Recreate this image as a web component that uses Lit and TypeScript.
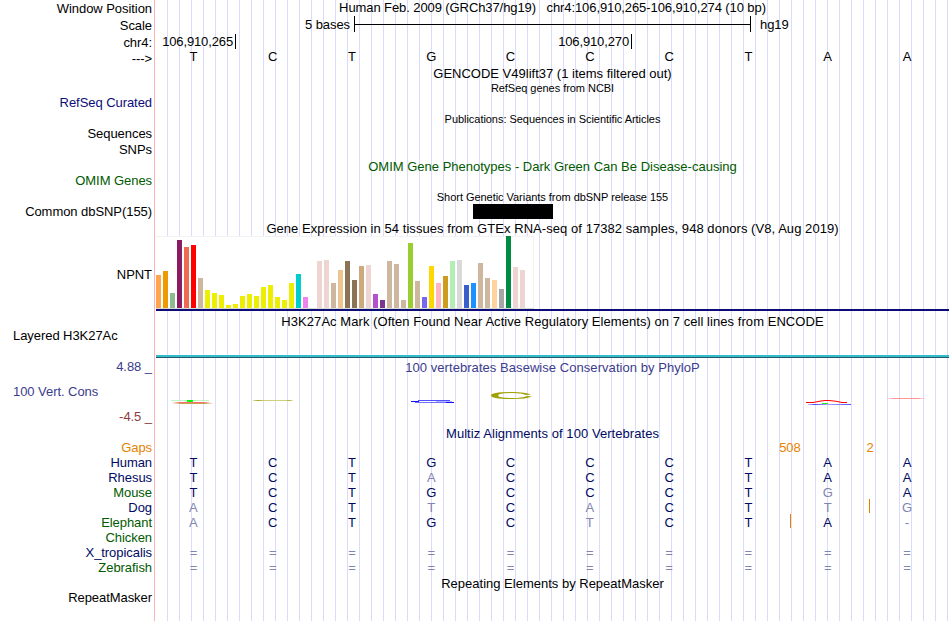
import { LitElement, html, css, svg } from 'lit';
import { customElement, property } from 'lit/decorators.js';
import { classMap } from 'lit/directives/class-map.js';

interface Label {
  text: string;
  color?: string;
  left?: boolean;
}

interface Species {
  name: string;
  bases: string;
  // bases that differ from the reference genome
  faded: number[];
  insert?: number;
}

const LABELS: Label[] = [
  { text: 'Window Position' },
  { text: 'Scale' },
  { text: 'chr4:' },
  { text: '--->' },
  { text: 'RefSeq Curated', color: 'blue' },
  { text: 'Sequences' },
  { text: 'SNPs' },
  { text: 'OMIM Genes', color: 'green' },
  { text: 'Common dbSNP(155)' },
  { text: 'NPNT' },
  { text: 'Layered H3K27Ac', left: true },
  { text: '4.88 _', color: 'slate' },
  { text: '100 Vert. Cons', color: 'slate', left: true },
  { text: '-4.5 _', color: 'maroon' },
  { text: 'Gaps', color: 'orange' },
  { text: 'Human', color: 'navy' },
  { text: 'Rhesus', color: 'navy' },
  { text: 'Mouse', color: 'green' },
  { text: 'Dog', color: 'navy' },
  { text: 'Elephant', color: 'green' },
  { text: 'Chicken', color: 'green' },
  { text: 'X_tropicalis', color: 'navy' },
  { text: 'Zebrafish', color: 'green' },
  { text: 'RepeatMasker' },
];

const SPECIES: Species[] = [
  { name: 'Human', bases: 'TCTGCCCTAA', faded: [] },
  { name: 'Rhesus', bases: 'TCTACCCTAA', faded: [3] },
  { name: 'Mouse', bases: 'TCTGCCCTGA', faded: [8] },
  { name: 'Dog', bases: 'ACTTCACTTG', faded: [0, 3, 5, 8, 9], insert: 9 },
  { name: 'Elephant', bases: 'ACTGCTCTA-', faded: [0, 5, 9], insert: 8 },
  { name: 'Chicken', bases: '          ', faded: [] },
  { name: 'X_tropicalis', bases: '==========', faded: [0, 1, 2, 3, 4, 5, 6, 7, 8, 9] },
  { name: 'Zebrafish', bases: '==========', faded: [0, 1, 2, 3, 4, 5, 6, 7, 8, 9] },
];

// [height, color] for each of the 54 tissues
const TISSUES: [number, string][] = [
  [33, '#ffa54f'], [37, '#ee9a00'], [15, '#8fbc8f'], [68, '#8b1c62'],
  [61, '#ee6a50'], [63, '#ff0000'], [30, '#cdb79e'], [18, '#eeee00'],
  [15, '#eeee00'], [13, '#eeee00'], [3, '#eeee00'], [4, '#eeee00'],
  [12, '#eeee00'], [14, '#eeee00'], [12, '#eeee00'], [21, '#eeee00'],
  [23, '#eeee00'], [11, '#eeee00'], [8, '#eeee00'], [25, '#eeee00'],
  [34, '#00cdcd'], [11, '#ee82ee'], [0, '#9ac0cd'], [47, '#eed5d2'],
  [48, '#eed5d2'], [25, '#cdb79e'], [38, '#eec591'], [47, '#8b7355'],
  [28, '#8b7355'], [42, '#cdaa7d'], [43, '#eed5d2'], [14, '#b452cd'],
  [8, '#7a378b'], [47, '#cdb79e'], [44, '#cdb79e'], [8, '#cdb79e'],
  [65, '#9acd32'], [27, '#cdb79e'], [11, '#7a67ee'], [42, '#ffd700'],
  [25, '#ffb6c1'], [32, '#cd9b1d'], [47, '#b4eeb4'], [48, '#d9d9d9'],
  [23, '#3a5fcd'], [25, '#1e90ff'], [45, '#cdb79e'], [30, '#cdb79e'],
  [28, '#ffd39b'], [19, '#a6a6a6'], [72, '#008b45'], [41, '#eed5d2'],
  [38, '#eed5d2'], [0, '#ff00ff'],
];

const colors = css`
  .blue { color: #0c0c78; }
  .navy { color: #000a64; }
  .green { color: #005a00; }
  .slate { color: #3c3c8c; }
  .maroon { color: #8c3c3c; }
  .orange { color: #e68200; }
`;

@customElement('gb-labels')
export class GbLabels extends LitElement {
  @property({ type: Array }) labels: Label[] = [];

  static styles = [colors, css`
    :host {
      align-items: end;
      display: grid;
      grid-template-rows:
        16px 17px 17px 16px 44px 31px 16px 31px 31px 63px 61px 31px 25px 25px
        31px repeat(8, 15px) 30px;
      letter-spacing: -0.06px;
      padding: 0 2px 0 13px;
      text-align: right;
      white-space: pre;
    }

    .left {
      text-align: left;
    }
  `];

  render() {
    return this.labels.map(label => html`
      <div class=${classMap({ left: !!label.left, [label.color || 'black']: true })}>${label.text}</div>
    `);
  }
}

@customElement('gb-expression')
export class GbExpression extends LitElement {
  @property({ type: Array }) tissues: [number, string][] = [];

  static styles = css`
    :host {
      border-bottom: 2px solid #0c0c78;
      box-sizing: border-box;
      display: block;
      height: 75px;
    }

    .chart {
      align-items: flex-end;
      background: #fff;
      border-bottom: 1px solid #d8d8d4;
      box-shadow: inset 0 1px #f2f2f2, inset -1px 0 #f2f2f2;
      box-sizing: border-box;
      display: flex;
      gap: 2px;
      height: 73px;
      width: 378px;
    }

    .bar {
      width: 5px;
    }
  `;

  render() {
    return html`
      <div class="chart">
        ${this.tissues.map(([height, color]) => html`
          <div class="bar" style="height: ${height}px; background: ${color}"></div>
        `)}
      </div>
    `;
  }
}

@customElement('gb-conservation')
export class GbConservation extends LitElement {
  static styles = css`
    :host, svg {
      display: block;
      height: 51px;
      width: 793px;
    }
  `;

  renderFade(id: string, color: string) {
    return svg`
      <linearGradient id=${id}>
        <stop offset="0" stop-color=${color} stop-opacity="0.1" />
        <stop offset="0.2" stop-color=${color} />
        <stop offset="0.8" stop-color=${color} />
        <stop offset="1" stop-color=${color} stop-opacity="0.1" />
      </linearGradient>
    `;
  }

  render() {
    return html`
      <svg viewBox="0 0 793 51">
        <defs>
          ${this.renderFade('red', '#ff7070')}
          ${this.renderFade('tan', '#c8a050')}
          ${this.renderFade('pink', '#ff9696')}
          <linearGradient id="olive">
            <stop offset="0" stop-color="#a0a000" stop-opacity="0.3" />
            <stop offset="0.12" stop-color="#a8a820" />
            <stop offset="0.3" stop-color="#d0d080" />
            <stop offset="0.8" stop-color="#d0d080" />
            <stop offset="0.9" stop-color="#b0b030" />
            <stop offset="1" stop-color="#a0a000" stop-opacity="0.2" />
          </linearGradient>
          <linearGradient id="blue">
            <stop offset="0" stop-color="#4040ff" stop-opacity="0.3" />
            <stop offset="0.15" stop-color="#4c4cff" />
            <stop offset="0.45" stop-color="#a8a8ff" />
            <stop offset="1" stop-color="#5050ff" />
          </linearGradient>
        </defs>

        <rect x="15" y="25" width="38" height="1" fill="#c0f4c0" />
        <rect x="16" y="27" width="39" height="1" fill="url(#red)" />
        <rect x="17" y="28" width="40" height="1" fill="url(#tan)" />
        <rect x="31" y="25" width="6" height="2" fill="#00ff00" />

        <rect x="97" y="25" width="40" height="1" fill="url(#olive)" />

        <rect x="262" y="25" width="32" height="1" fill="#5050ff" />
        <rect x="255" y="26" width="8" height="1" fill="#1010ff" />
        <rect x="280" y="26" width="16" height="1" fill="#b4b4ff" />
        <rect x="259" y="27" width="32" height="1" fill="#7070ff" />
        <rect x="290" y="27" width="8" height="1" fill="#1010ff" />

        <path fill="#a0a000" d="M375 19.5Q370 17 356 17Q335 17 335 20.5Q335 24 356 24Q371 24 376 21.5L371 21Q366 23 356 23Q342 23 342 20.5Q342 18 356 18Q366 18 370 20Z" />

        <path d="M650 27.5H657L665 26L669 25.5H673L680 26.3L686 27.5H691" fill="none" stroke="#ff0000" stroke-width="1.1" />
        <rect x="652" y="29" width="43" height="1" fill="url(#blue)" />
        <rect x="666" y="28" width="6" height="1" fill="#20f020" />

        <rect x="730" y="23" width="40" height="1" fill="url(#pink)" />
      </svg>
    `;
  }
}

@customElement('gb-bases')
export class GbBases extends LitElement {
  @property() bases: string = '';
  @property({ type: Array }) faded: number[] = [];
  @property({ type: Number }) insert?: number;

  static styles = css`
    :host {
      display: block;
      position: relative;
    }

    .bases {
      display: grid;
      grid-template-columns: repeat(10, 1fr);
      margin: 0 2.4px 0 -2.2px;
      text-align: center;
      white-space: pre;
    }

    .faded {
      color: #8085b2;
    }

    .insert {
      background: #e68200;
      bottom: 2px;
      height: 14px;
      position: absolute;
      width: 1px;
    }
  `;

  render() {
    return html`
      <div class="bases">
        ${[...this.bases].map((base, i) => html`
          <span class=${classMap({ faded: this.faded.includes(i) })}>${base}</span>
        `)}
      </div>
      ${this.insert ? html`
        <div class="insert" style="left: ${Math.floor(this.insert * 79.3)}px"></div>
      ` : ''}
    `;
  }
}

@customElement('app-root')
export class AppRoot extends LitElement {
  static styles = [colors, css`
    :host {
      background: #fff;
      color: #000;
      display: grid;
      font: 13px/15px "Liberation Sans", Arial, sans-serif;
      grid-template-columns: 154px 795px;
      height: 621px;
      overflow: hidden;
    }

    main {
      align-content: start;
      align-items: end;
      background: linear-gradient(90deg, #dcdcfa 1px, transparent 1px) 11px 0 / 12px 100%;
      border-left: 1px solid #fff;
      box-shadow: -1px 0 #ffb4b4;
      display: grid;
      grid-template-columns: 793px;
      grid-template-rows:
        15px 17px 18px 14px 17px 13px 31px 49px 29px 16px 17px 75px 18px 29px
        17px 51px 15px 14px repeat(8, 15px) 16px;
      margin-left: 1px;
      width: 793px;
    }

    .title {
      text-align: center;
      white-space: pre;
    }

    .small {
      font-size: 11px;
      letter-spacing: -0.04px;
      line-height: 12px;
    }

    .tight {
      letter-spacing: -0.09px;
    }

    .loose {
      letter-spacing: 0.055px;
    }

    .scale {
      align-items: center;
      display: flex;
      letter-spacing: -0.08px;
      padding-left: 149px;
    }

    .ruler {
      border: solid #000;
      border-width: 0 1px;
      box-sizing: border-box;
      display: flex;
      align-items: center;
      height: 16px;
      margin: 0 9px 0 4px;
      width: 397px;
    }

    .ruler::before {
      background: #000;
      content: "";
      height: 1px;
      width: 100%;
    }

    .coords {
      display: grid;
      grid-template-columns: 80px 396px;
      letter-spacing: -0.13px;
      text-align: right;
    }

    .coords span {
      border-right: 1px solid #000;
      margin-bottom: 1px;
      padding-right: 2px;
    }

    .variant {
      background: #000;
      height: 15px;
      margin-left: 317px;
      width: 80px;
    }

    .histone {
      background: #34bcc8;
      border-bottom: 1px solid #205a6c;
      height: 2px;
    }

    .gaps {
      display: grid;
      grid-template-columns: 80px 80px;
      margin-left: 594px;
      text-align: center;
    }
  `];

  render() {
    return html`
      <gb-labels .labels=${LABELS}></gb-labels>
      <main>
        <div class="title tight">Human Feb. 2009 (GRCh37/hg19)   chr4:106,910,265-106,910,274 (10 bp)</div>
        <div class="scale">5 bases<div class="ruler"></div>hg19</div>
        <div class="coords"><span>106,910,265</span><span>106,910,270</span></div>
        <gb-bases bases="TCTGCCCTAA"></gb-bases>
        <div class="title">GENCODE V49lift37 (1 items filtered out)</div>
        <div class="title small">RefSeq genes from NCBI</div>
        <div class="title small">Publications: Sequences in Scientific Articles</div>
        <div class="title green">OMIM Gene Phenotypes - Dark Green Can Be Disease-causing</div>
        <div class="title small">Short Genetic Variants from dbSNP release 155</div>
        <div class="variant"></div>
        <div class="title loose">Gene Expression in 54 tissues from GTEx RNA-seq of 17382 samples, 948 donors (V8, Aug 2019)</div>
        <gb-expression .tissues=${TISSUES}></gb-expression>
        <div class="title loose">H3K27Ac Mark (Often Found Near Active Regulatory Elements) on 7 cell lines from ENCODE</div>
        <div class="histone"></div>
        <div class="title slate loose">100 vertebrates Basewise Conservation by PhyloP</div>
        <gb-conservation></gb-conservation>
        <div class="title navy loose">Multiz Alignments of 100 Vertebrates</div>
        <div class="gaps orange"><span>508</span><span>2</span></div>
        ${SPECIES.map(species => html`
          <gb-bases
            class="navy"
            .bases=${species.bases}
            .faded=${species.faded}
            .insert=${species.insert}
          ></gb-bases>
        `)}
        <div class="title">Repeating Elements by RepeatMasker</div>
      </main>
    `;
  }
}
